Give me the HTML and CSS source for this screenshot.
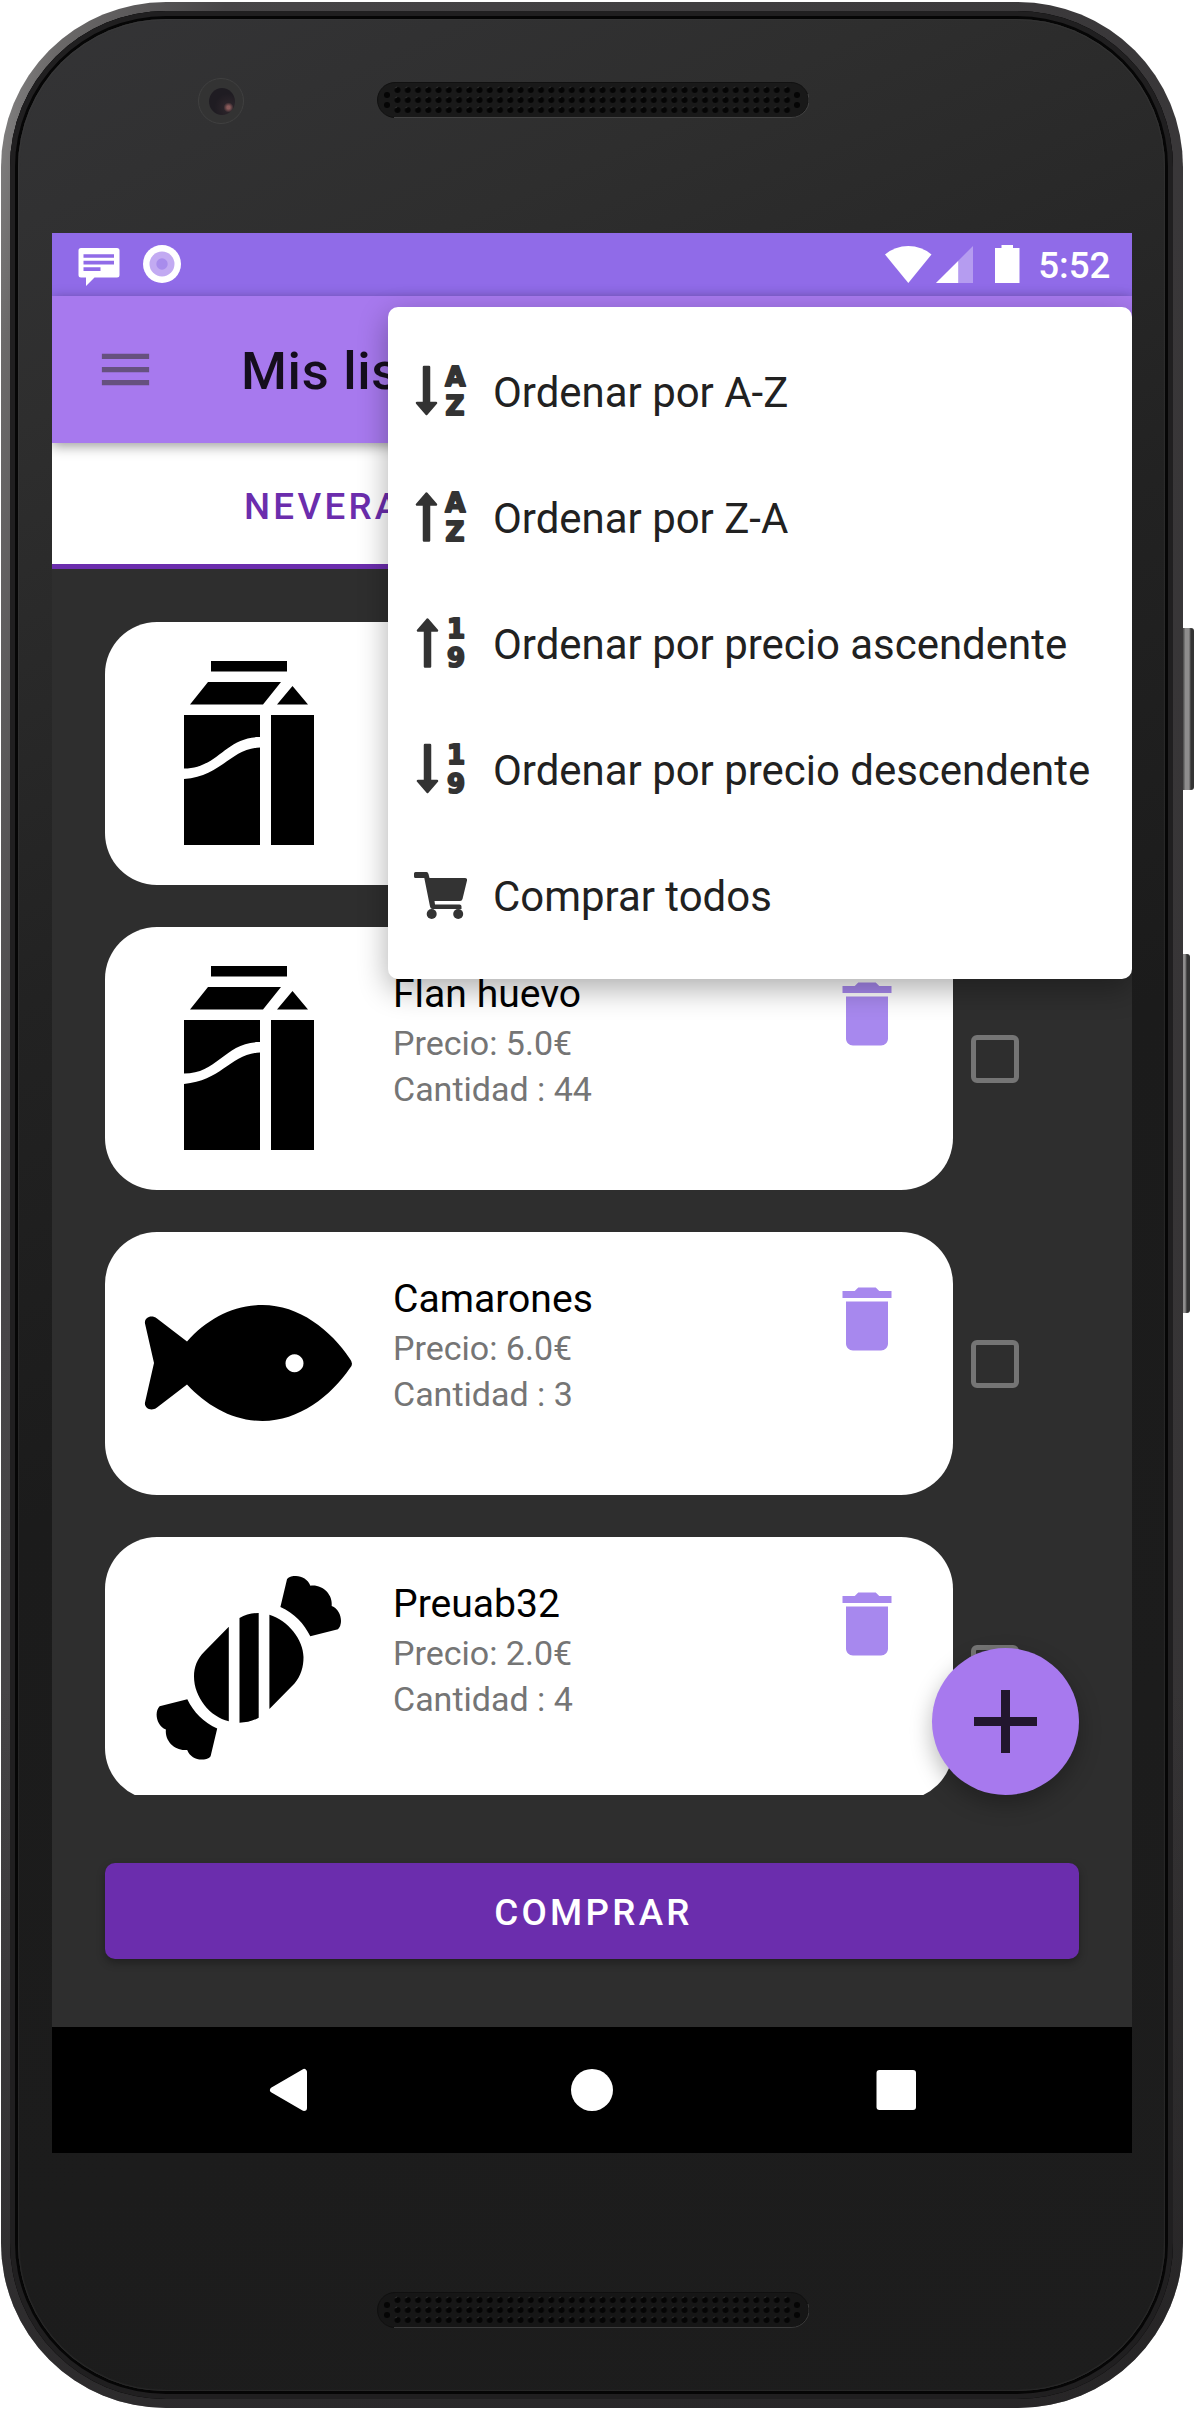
FILE: index.html
```html
<!DOCTYPE html>
<html lang="es">
<head>
<meta charset="utf-8">
<title>Mis listas</title>
<link rel="stylesheet" href="styles.css">
</head>
<body>
<div class="stage">
  <div class="side-button power"></div>
  <div class="side-button volume"></div>
  <div class="phone">
    <div class="rim">
      <div class="glass">
        <div class="bezel-top">
          <div class="camera"><div class="lens"></div></div>
          <svg class="speaker" width="432" height="36" viewBox="0 0 432 36">
            <defs><pattern id="holes" x="15.4" y="3" width="10.25" height="10" patternUnits="userSpaceOnUse"><circle cx="5.1" cy="5" r="3" fill="#050505"/><path d="M2.6 3.4Q3.4 2.2 4.8 2" stroke="#3a3a3a" stroke-width=".8" fill="none"/></pattern></defs>
            <rect x=".5" y=".5" width="431" height="35" rx="17.5" fill="#191919" stroke="#111"/>
            <path d="M17 35.5H414A17.5 17.5 0 0 0 431 12" fill="none" stroke="#444"/>
            <rect x="15.4" y="3" width="399.7" height="30" fill="url(#holes)"/>
            <g fill="#050505"><circle cx="10" cy="13" r="3"/><circle cx="10" cy="23" r="3"/><circle cx="420" cy="13" r="3"/><circle cx="420" cy="23" r="3"/></g>
          </svg>
        </div>
        <div class="screen">
          <div class="status-bar">
            <svg class="chat" width="42" height="39" viewBox="0 0 42 39"><path fill="#fff" d="M3 0H39A2.500 2.500 0 0 1 41.500 2.500V27A2.500 2.500 0 0 1 39 29.500H16.500L8 38V29.500H3A2.500 2.500 0 0 1 .5 27V2.500A2.500 2.500 0 0 1 3 0Z"/><path d="M5.500 8H36M5.500 14.700H36M5.500 21.200H22.500" stroke="#906be8" stroke-width="3.700"/></svg>
            <svg class="dot" width="38" height="38" viewBox="0 0 38 38"><circle cx="19" cy="19" r="19" fill="#fff"/><circle cx="19" cy="19" r="12.500" fill="#c2aaf2"/><circle cx="19" cy="19" r="5.700" fill="#a88cec"/></svg>
            <svg class="signals" width="135" height="38" viewBox="0 0 135 38"><path fill="#fff" d="M0 9.500Q10 1 23.300 1T46.500 9.500L23.300 38Z"/><path fill="#b59cf0" d="M88 1V38H51Z"/><path fill="#fff" d="M73.200 16V38H51Z"/><path fill="#fff" d="M110 3H116.500V0H128V3H134.500V38H110Z"/></svg>
            <span class="clock">5:52</span>
          </div>
          <div class="app-bar">
            <svg width="63" height="63" viewBox="0 0 24 24"><path fill="#66517f" d="M3 18h18v-2H3zm0-5h18v-2H3zm0-7v2h18V6z"/></svg>
            <h1>Mis listas</h1>
          </div>
          <div class="tabs"><div class="tab">NEVERA</div></div>
          <div class="list">
            <div class="row">
              <div class="card">
                <svg class="product" width="288" height="263" viewBox="0 0 288 263"><use href="#milk"/></svg>
              </div>
            </div>
            <div class="row">
              <div class="card">
                <svg class="product" width="288" height="263" viewBox="0 0 288 263"><g id="milk"><path d="M106 39h76v10.500h-76zM103 60H176L158 82.500H85zM187.500 64 203 82.500H172zM166 93h43V223H166zM79 93H155V115C120 115 113 146.500 79 146.500zM155 125.500V223H79V157C117 154 125 127 155 125.500z"/></g></svg>
                <div class="info"><h2>Flan huevo</h2><p>Precio: 5.0€</p><p>Cantidad : 44</p></div>
                <svg class="trash" width="84" height="84" viewBox="0 0 24 24"><path id="bin" d="M6 19c0 1.100.9 2 2 2h8c1.100 0 2-.9 2-2V7H6v12zM19 4h-3.500l-1-1h-5l-1 1H5v2h14V4z"/></svg>
              </div>
              <div class="check"></div>
            </div>
            <div class="row">
              <div class="card">
                <svg class="product" width="288" height="263" viewBox="0 0 288 263"><path fill-rule="evenodd" d="M82 109.500C102 87 128 73 157.500 73C194 73 226 98 245 127Q249 132 245 136C226 164 194 189 157.500 189C128 189 102 174 82 152.500L52 175.500C46 180 39 176 40 170.500L49 131 40 91.500C39 86 46 82 52 86.500ZM189.500 122.300a9 9 0 1 0 .01 0z"/></svg>
                <div class="info"><h2>Camarones</h2><p>Precio: 6.0€</p><p>Cantidad : 3</p></div>
                <svg class="trash" width="84" height="84" viewBox="0 0 24 24"><use href="#bin"/></svg>
              </div>
              <div class="check"></div>
            </div>
            <div class="row">
              <div class="card">
                <svg class="product" width="288" height="263" viewBox="0 0 288 263">
                  <path d="M123.800 89.700V184.300C105 180 89 160 89 139.500C89 130 92 122 99.500 114.500zM134.500 81Q143 76 153.700 76V180.700Q145 185.700 134.500 185.700zM164.400 77.700C183 83 198.500 103 198.500 120C198.500 130 196 138.500 189.500 146.500L164.400 172z"/>
                  <path id="wrap" d="M175.400 70 182 42.300C184 39.500 188 39 191 39C197 39 203 42.500 205.400 48.700C217 47 228 57 226.700 69C233 71.500 236 78 236 84Q236 89 233 92.300L205.300 99.300C199 86.500 189.500 76.500 175.400 70z"/>
                  <use href="#wrap" transform="rotate(180 143.800 130.800)"/>
                </svg>
                <div class="info"><h2>Preuab32</h2><p>Precio: 2.0€</p><p>Cantidad : 4</p></div>
                <svg class="trash" width="84" height="84" viewBox="0 0 24 24"><use href="#bin"/></svg>
              </div>
              <div class="check"></div>
            </div>
          </div>
          <div class="footer"><div class="buy">COMPRAR</div></div>
          <div class="nav-bar">
            <svg width="1080" height="126" viewBox="0 0 1080 126"><path fill="#fff" stroke="#fff" stroke-width="6" stroke-linejoin="round" d="M221 63 252 45V81Z"/><circle cx="540" cy="63" r="21" fill="#fff"/><rect x="824.500" y="43" width="39.500" height="40" rx="3" fill="#fff"/></svg>
          </div>
          <div class="fab"><svg width="63" height="63" viewBox="0 0 63 63"><path fill="#22162e" d="M27 0h9v27h27v9H36v27h-9V36H0v-9h27z"/></svg></div>
          <div class="menu">
            <div class="item"><svg width="54" height="52" viewBox="0 0 54 52"><path class="arrow" d="M10 2H15V38H22L12.500 49 3 38H10Z"/><text class="mark" x="41.300" y="20.500">A</text><text class="mark" x="41" y="49.500">Z</text></svg><span>Ordenar por A-Z</span></div>
            <div class="item"><svg width="54" height="52" viewBox="0 0 54 52"><path class="arrow" d="M10 49.500H15V13.500H22L12.500 2.500 3 13.500H10Z"/><text class="mark" x="41.300" y="20.500">A</text><text class="mark" x="41" y="49.500">Z</text></svg><span>Ordenar por Z-A</span></div>
            <div class="item"><svg width="54" height="52" viewBox="0 0 54 52"><path class="arrow" d="M11 49.500H16V13.500H23L13.500 2.500 4 13.500H11Z"/><text class="mark" x="42" y="20.500">1</text><text class="mark" x="42" y="49.500">9</text></svg><span>Ordenar por precio ascendente</span></div>
            <div class="item"><svg width="54" height="52" viewBox="0 0 54 52"><path class="arrow" d="M11 2H16V38H23L13.500 49 4 38H11Z"/><text class="mark" x="42" y="20.500">1</text><text class="mark" x="42" y="49.500">9</text></svg><span>Ordenar por precio descendente</span></div>
            <div class="item"><svg width="54" height="52" viewBox="0 0 54 52"><path fill="#333" d="M1.500 3H12.500Q14 3 14.500 5L15.500 9H51Q53.500 9 53 11.500L48.500 30Q48 32 46 32H20.500L21 35.500H45.500Q47.500 35.500 47.500 37.500V40H18.500Q16.500 40 16 37.500L10.300 9H1.500Q0 9 0 7.500V4.500Q0 3 1.500 3Z"/><circle cx="17.700" cy="45" r="5" fill="#333"/><circle cx="44.200" cy="45" r="5" fill="#333"/></svg><span>Comprar todos</span></div>
          </div>
        </div>
        <div class="bezel-bottom">
          <svg width="432" height="36" viewBox="0 0 432 36">
            <rect x=".5" y=".5" width="431" height="35" rx="17.500" fill="#161616" stroke="#101010"/>
            <path d="M17 35.500H414A17.500 17.500 0 0 0 431 12" fill="none" stroke="#3c3c3c"/>
            <rect x="15.400" y="3" width="399.700" height="30" fill="url(#holes)"/>
            <g fill="#050505"><circle cx="10" cy="13" r="3"/><circle cx="10" cy="23" r="3"/><circle cx="420" cy="13" r="3"/><circle cx="420" cy="23" r="3"/></g>
          </svg>
        </div>
      </div>
    </div>
  </div>
</div>
</body>
</html>
```
FILE: styles.css
```css
* { box-sizing: border-box; }
body { margin: 0; background: #fff; font-family: Roboto, sans-serif; }
svg { display: block; flex: none; }
h1, h2, p { margin: 0; font-weight: 400; }

/* Device shell */
.stage { position: relative; width: 1194px; height: 2409px; padding: 2px 11px 1px 1px; overflow: hidden; }
.side-button { position: absolute; right: 0; width: 14px; border-radius: 3px; background: linear-gradient(90deg, #555 0 4px, #8e8d8d 5px 9px, #333 11px); }
.power { top: 628px; height: 162px; }
.volume { top: 954px; height: 359px; right: 4px; }
.phone {
  position: relative; height: 2406px; padding: 9px 10px 9px 9px; border-radius: 165px;
  background: linear-gradient(100deg, #8a8989 0, #6b6969 4%, #474547 14%, #3c3a3c 60%, #343233 100%);
}
.phone::before { content: ""; position: absolute; inset: 0; border-radius: 165px; background: linear-gradient(180deg, transparent 70%, rgba(30,29,30,.6) 97%); }
.rim { position: relative; height: 100%; padding: 8px; border-radius: 156px; background: #1b1a1b; box-shadow: inset 0 0 0 5px #201f20, inset 0 0 0 8px #060606; }
.glass {
  height: 100%; border-radius: 148px; padding: 0 34px;
  background: linear-gradient(155deg, #343436 0, #2e2e2e 14%, #222 34%, #1b1b1b 52%, #1d1d1d 100%);
  box-shadow: inset 0 0 2px #444;
}
.bezel-top { height: 214px; display: flex; padding: 59px 0 0 146px; gap: 133px; }
.camera { width: 46px; height: 46px; border-radius: 50%; display: flex; align-items: center; justify-content: center; background: #333; border: 1px solid #404040; }
.lens { width: 26px; height: 27px; margin-left: 2px; border-radius: 50%; background: radial-gradient(circle at 75% 72%, #8a5a5a 0 1.500px, #2a2329 5px, #1f1c22 14px); }
.speaker { margin-top: 4px; }
.bezel-bottom { padding: 139px 0 0 325px; }

/* Screen */
.screen { position: relative; width: 1080px; height: 1920px; background: #2e2e2e; display: flex; flex-direction: column; overflow: hidden; }
.status-bar { height: 63px; flex: none; background: #906be8; display: flex; align-items: flex-start; padding: 12px 21.500px 0 26px; color: #fff; }
.chat { margin-top: 3px; }
.dot { margin-left: 23px; }
.signals { margin-left: auto; }
.clock { margin: -1px 0 0 18.500px; font-size: 36.75px; font-weight: 500; line-height: 43px; }
.app-bar { position: relative; z-index: 1; height: 147px; flex: none; background: #a779ee; display: flex; align-items: center; padding-left: 42px; gap: 84px; box-shadow: 0 3px 12px rgba(0,0,0,.4); }
.app-bar h1 { padding-top: 2px; font-size: 52.5px; font-weight: 500; letter-spacing: .7px; color: #150e1d; }
.tabs { height: 126px; flex: none; background: #fff; border-bottom: 5px solid #6b2dad; display: flex; align-items: center; padding: 5px 0 0 192px; }
.tab { font-size: 36.75px; font-weight: 500; letter-spacing: 3.28px; color: #6b2dad; }

.list { height: 1226px; flex: none; overflow: hidden; padding: 53px 53px 0; display: flex; flex-direction: column; gap: 42px; }
.row { display: flex; align-items: center; gap: 18px; flex: none; }
.card { width: 848px; height: 263px; border-radius: 52px; background: #fff; display: flex; }
.info { width: 432px; padding-top: 43px; color: #757575; font-size: 34px; line-height: 46px; }
.info h2 { font-size: 39.1px; line-height: 49px; padding-bottom: 1px; color: #000; }
.trash { margin-top: 44.5px; fill: #a788ee; }
.check { width: 48px; height: 48px; border: 5px solid #757575; border-radius: 6px; }

.footer { flex: none; padding: 68px 53px; }
.buy { height: 96px; padding: 2px 0 0 3px; border-radius: 10px; background: #6b2dad; color: #fff; display: flex; align-items: center; justify-content: center; font-size: 36.75px; font-weight: 500; letter-spacing: 3.28px; box-shadow: 0 4px 8px rgba(0,0,0,.3); }
.nav-bar { height: 126px; background: #000; }

.fab { position: absolute; left: 880px; top: 1415px; width: 147px; height: 147px; border-radius: 50%; background: #a779ee; display: flex; align-items: center; justify-content: center; box-shadow: 0 9px 22px rgba(0,0,0,.28); }

/* Overflow menu */
.menu { position: absolute; z-index: 2; right: 0; top: 74px; width: 744px; height: 672px; padding: 21px 0; border-radius: 10px; background: #fff; box-shadow: 0 10px 30px rgba(0,0,0,.32); }
.item { height: 126px; display: flex; align-items: center; padding-left: 26px; gap: 25px; font-size: 41.95px; color: #212121; white-space: nowrap; }
.item span { padding-top: 3px; }
.arrow { fill: #333; stroke: #333; stroke-width: 2.500px; stroke-linejoin: round; }
.mark { font-family: "DejaVu Sans", sans-serif; font-size: 26px; font-weight: 700; text-anchor: middle; fill: #333; stroke: #333; stroke-width: 2px; stroke-linejoin: round; }
```
